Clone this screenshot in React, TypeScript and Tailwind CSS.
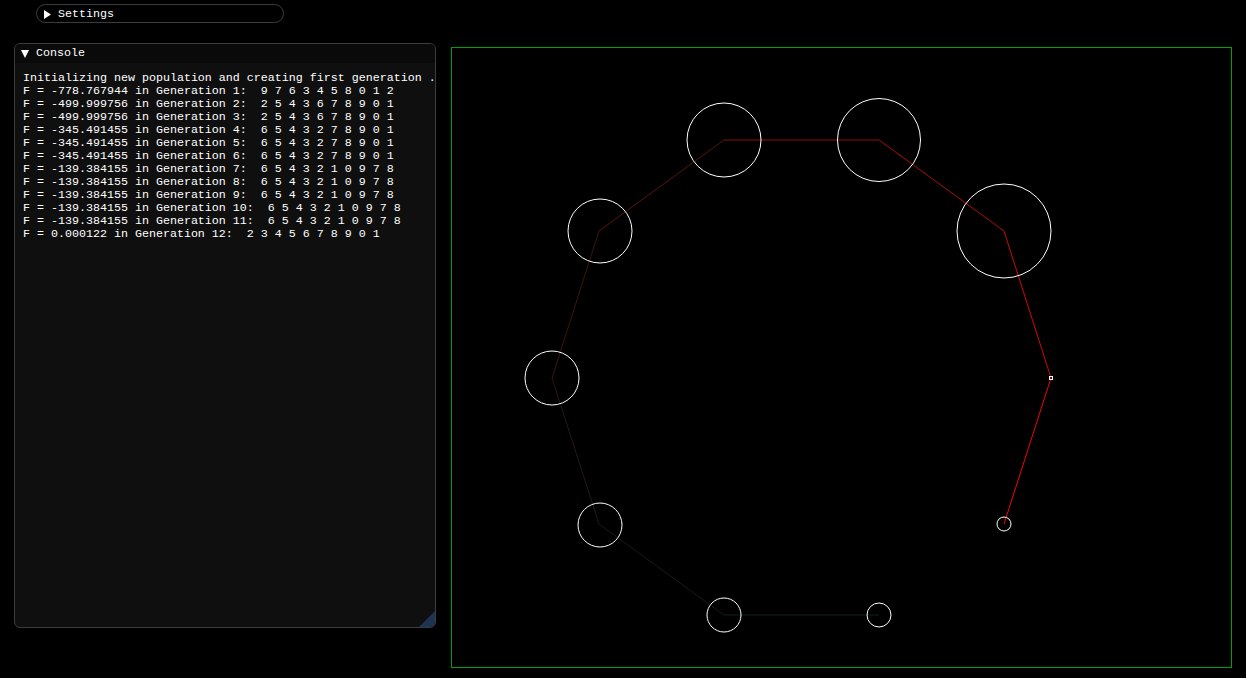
import React from 'react'

const LINES = [
  'Initializing new population and creating first generation ...',
  'F = -778.767944 in Generation 1:  9 7 6 3 4 5 8 0 1 2',
  'F = -499.999756 in Generation 2:  2 5 4 3 6 7 8 9 0 1',
  'F = -499.999756 in Generation 3:  2 5 4 3 6 7 8 9 0 1',
  'F = -345.491455 in Generation 4:  6 5 4 3 2 7 8 9 0 1',
  'F = -345.491455 in Generation 5:  6 5 4 3 2 7 8 9 0 1',
  'F = -345.491455 in Generation 6:  6 5 4 3 2 7 8 9 0 1',
  'F = -139.384155 in Generation 7:  6 5 4 3 2 1 0 9 7 8',
  'F = -139.384155 in Generation 8:  6 5 4 3 2 1 0 9 7 8',
  'F = -139.384155 in Generation 9:  6 5 4 3 2 1 0 9 7 8',
  'F = -139.384155 in Generation 10:  6 5 4 3 2 1 0 9 7 8',
  'F = -139.384155 in Generation 11:  6 5 4 3 2 1 0 9 7 8',
  'F = 0.000122 in Generation 12:  2 3 4 5 6 7 8 9 0 1',
]

// path order, from the dim end to the bright end
const PATH: [number, number][] = [
  [878, 615],
  [723, 615],
  [598, 524],
  [551, 378],
  [598, 231],
  [723, 140],
  [878, 140],
  [1003, 231],
  [1050, 378],
  [1003, 524],
]

const SEG_COLORS = ['#102016', '#1c1a19', '#2a1515', '#3d1414', '#581313', '#8a1010', '#b00c0c', '#d00808', '#f00505']

const CIRCLES = [
  { x: 723, y: 140, r: 37 },
  { x: 878, y: 140, r: 41.5 },
  { x: 1003, y: 231, r: 47 },
  { x: 1003, y: 524, r: 7 },
  { x: 878, y: 615, r: 12 },
  { x: 723, y: 615, r: 17 },
  { x: 599, y: 525, r: 22 },
  { x: 551, y: 378, r: 27 },
  { x: 599, y: 231, r: 32 },
]

const mono = "font-['Liberation_Mono','DejaVu_Sans_Mono',monospace] text-[11.67px] leading-[13px] text-white"

export default function App() {
  return (
    <div className="w-[1246px] h-[678px] bg-black overflow-hidden">
      {/* Settings header */}
      <div className="pt-[4px] pl-[36px]">
        <div className="w-[248px] h-[19px] rounded-full border border-[#3b3b42] flex items-center pl-[7px] gap-[7px] pt-[1px]">
          <svg width="7" height="9" viewBox="0 0 7 9">
            <polygon points="0,0 7,4.5 0,9" fill="#fff" />
          </svg>
          <span className={mono}>Settings</span>
        </div>
      </div>

      <div className="flex items-start pl-[14px] pt-[20px] gap-[15px]">
        {/* Console window */}
        <div className="relative w-[422px] h-[585px] rounded-[6px] border border-[#3b3b42] bg-[#0f0f0f] overflow-hidden">
          <div className="h-[19px] bg-[#0a0a0a] flex items-center pl-[6px] gap-[7px]">
            <svg width="8" height="8" viewBox="0 0 8 8">
              <polygon points="0,0 8,0 4,8" fill="#fff" />
            </svg>
            <span className={mono}>Console</span>
          </div>
          <div className={`${mono} pl-[8px] pt-[9px] pr-[2px] whitespace-pre overflow-hidden`}>
            {LINES.map((l, i) => (
              <div key={i}>{l}</div>
            ))}
          </div>
          <svg className="absolute right-0 bottom-0" width="16" height="16" viewBox="0 0 16 16">
            <polygon points="16,0 16,16 0,16" fill="#1d3352" />
          </svg>
        </div>

        {/* Canvas */}
        <div className="mt-[4px] w-[781px] h-[621px] border border-[#00a000] bg-black">
          <svg width="779" height="619" viewBox="451 48 779 619" className="block">
            {PATH.slice(0, -1).map((p, i) => (
              <line
                key={i}
                x1={p[0]}
                y1={p[1]}
                x2={PATH[i + 1][0]}
                y2={PATH[i + 1][1]}
                stroke={SEG_COLORS[i]}
                strokeWidth="1"
              />
            ))}
            {CIRCLES.map((c, i) => (
              <circle key={i} cx={c.x} cy={c.y} r={c.r} fill="none" stroke="#fff" strokeWidth="1" />
            ))}
            <rect x="1048.5" y="376.5" width="3" height="3" fill="none" stroke="#fff" strokeWidth="1" />
          </svg>
        </div>
      </div>
    </div>
  )
}
